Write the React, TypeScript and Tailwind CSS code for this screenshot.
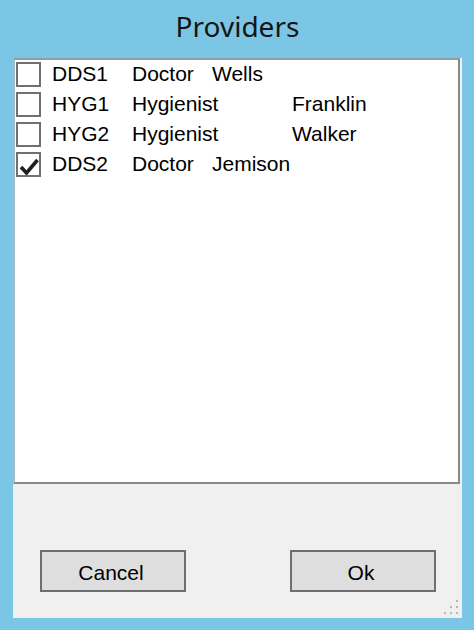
import React, { useState } from 'react';

// Provider rows; tabs line up the columns like the WinForms CheckedListBox does
const providers = [
  { id: 'DDS1', label: 'DDS1\tDoctor\tWells', checked: false },
  { id: 'HYG1', label: 'HYG1\tHygienist\tFranklin', checked: false },
  { id: 'HYG2', label: 'HYG2\tHygienist\tWalker', checked: false },
  { id: 'DDS2', label: 'DDS2\tDoctor\tJemison', checked: true },
];

const CheckBox: React.FC<{ checked: boolean }> = ({ checked }) => (
  <div className="w-[25px] h-[25px] border-2 border-[#707070] bg-white shrink-0">
    {checked && (
      <svg width="21" height="21" viewBox="0 0 21 21" className="block">
        <path d="M3 13 L8.5 19 L19.5 6" fill="none" stroke="#1f1f1f" strokeWidth="3.6" />
      </svg>
    )}
  </div>
);

const ResizeGrip: React.FC = () => (
  <svg width="14" height="14" viewBox="0 0 14 14" className="absolute right-[4px] bottom-[4px]">
    {[
      [12, 0],
      [6, 6],
      [12, 6],
      [0, 12],
      [6, 12],
      [12, 12],
    ].map(([x, y]) => (
      <rect key={`${x}-${y}`} x={x} y={y} width="2" height="2" fill="#b8b8b8" />
    ))}
  </svg>
);

const App: React.FC = () => {
  const [items, setItems] = useState(providers);

  const toggle_item = (id: string) => {
    setItems((prev) => prev.map((p) => (p.id === id ? { ...p, checked: !p.checked } : p)));
  };

  return (
    <div className="w-[474px] h-[630px] bg-[#7cc6e5] flex flex-col pl-[13px] pr-[12px] pb-[12px] font-['Liberation_Sans',Arial,sans-serif]">
      <div className="h-[58px] shrink-0 flex justify-center pt-[7px]">
        <h1 className="text-[28px] leading-[38px] text-[#141414] font-['Noto_Sans',sans-serif] font-normal">
          Providers
        </h1>
      </div>

      <div className="relative flex-1 bg-[#f0f0f0] flex flex-col">
        <div className="h-[426px] mr-[2px] bg-white border-2 border-t-[#959ca6] border-l-[#a9bac6] border-r-[#86888f] border-b-[#86888f]">
          {items.map((item) => (
            <div
              key={item.id}
              className="h-[30px] flex items-start pt-[2px] pl-[1px] cursor-default"
              onClick={() => toggle_item(item.id)}
            >
              <CheckBox checked={item.checked} />
              <div className="ml-[11px] -mt-[2px] h-[28px] leading-[28px] text-[21px] text-black whitespace-pre [tab-size:80px]">
                {item.label}
              </div>
            </div>
          ))}
        </div>

        <div className="flex justify-between pl-[27px] pr-[26px] mt-[66px]">
          <button className="w-[146px] h-[42px] bg-[#dedede] border-2 border-[#6f6f6f] text-[21px] text-black pt-[3px] pr-[4px] flex items-center justify-center">
            Cancel
          </button>
          <button className="w-[146px] h-[42px] bg-[#dedede] border-2 border-[#6f6f6f] text-[21px] text-black pt-[3px] pr-[4px] flex items-center justify-center">
            Ok
          </button>
        </div>

        <ResizeGrip />
      </div>
    </div>
  );
};

export default App;
